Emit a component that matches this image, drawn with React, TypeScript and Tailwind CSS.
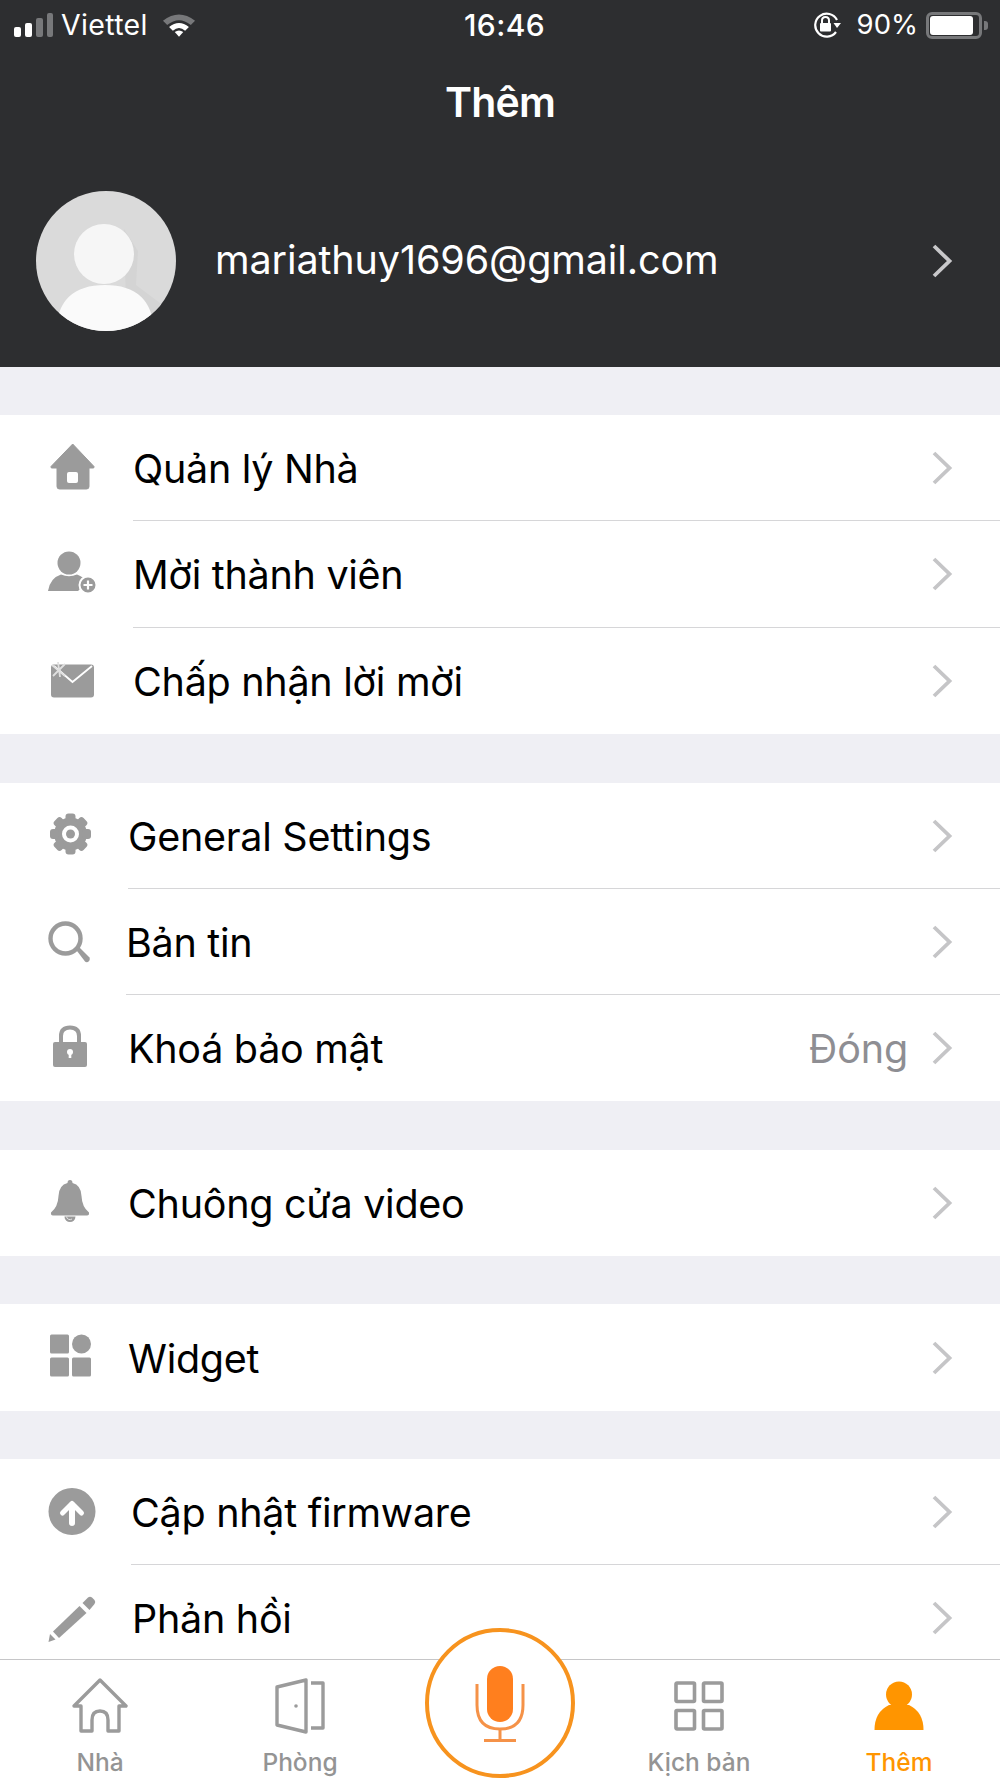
import type { ReactNode } from "react";

const GRAY = "#9b9b9b";

function Chevron({ color = "#c5c5c7" }: { color?: string }) {
  return (
    <svg width="22" height="34" viewBox="0 0 22 34" fill="none" className="shrink-0">
      <polyline points="3,2 18.500,17 3,32" stroke={color} strokeWidth="3.8" />
    </svg>
  );
}

function Icon({ children }: { children: ReactNode }) {
  return (
    <svg width="50" height="50" viewBox="0 0 50 50" fill={GRAY} className="overflow-visible">
      {children}
    </svg>
  );
}

const HomeIcon = (
  <Icon>
    <path d="M24.7 1 L46 23.5 Q46.5 25 45 25 L41 25 L41 43.5 Q41 46 38.5 46 L11.5 46 Q9 46 9 43.5 L9 25 L4 25 Q2.5 25 3 23.5 Z" stroke={GRAY} strokeLinejoin="round" />
    <rect x="19" y="29" width="11" height="11" rx="2" fill="#fff" />
  </Icon>
);

const AddUserIcon = (
  <Icon>
    <circle cx="21" cy="14" r="11.5" />
    <path d="M0 42 Q2 29 13 25.5 Q21 29 29 25.5 Q36 28 39 33 L30 42 Z" />
    <circle cx="40" cy="36" r="8.5" stroke="#fff" strokeWidth="2" />
    <path d="M40 31.5 V40.5 M35.5 36 H44.5" stroke="#fff" strokeWidth="2.2" />
  </Icon>
);

const MailIcon = (
  <Icon>
    <rect x="3" y="8.5" width="43" height="33" rx="3" />
    <polyline points="6,10 24.5,26 44,10" fill="none" stroke="#fff" strokeWidth="1.8" />
    <path d="M4 9 L17 20 M17 8 L5 20 M10 6 L12 21" stroke="#e0e0e0" strokeWidth="1.8" fill="none" />
  </Icon>
);

const GearIcon = (
  <Icon>
    <circle cx="22.5" cy="23" r="16.5" />
    {[0, 45, 90, 135, 180, 225, 270, 315].map((a) => (
      <rect key={a} x="17.5" y="2.5" width="10" height="9" rx="3" transform={`rotate(${a} 22.5 23)`} />
    ))}
    <circle cx="22.5" cy="23" r="8.5" fill="#fff" />
    <circle cx="22.5" cy="23" r="4.5" />
  </Icon>
);

const SearchIcon = (
  <Icon>
    <circle cx="17.5" cy="21.5" r="15" fill="none" stroke={GRAY} strokeWidth="4.4" />
    <path d="M27.5 32 L30.5 29.500 L41.5 40.5 Q42.500 43 40 45 Q38 45.500 37 44.500 Z" />
  </Icon>
);

const LockIcon = (
  <Icon>
    <path d="M13 20 V13 Q13 4.5 22 4.5 Q31 4.5 31 13 V20" fill="none" stroke={GRAY} strokeWidth="4" />
    <rect x="5" y="19" width="34" height="25" rx="2" />
    <circle cx="22" cy="29" r="3" fill="#fff" />
    <rect x="20.7" y="29" width="2.6" height="6" fill="#fff" />
  </Icon>
);

const BellIcon = (
  <Icon>
    <path d="M22 2 Q24.5 2 24.5 5 Q33 7 33.5 18 Q34 29 41 34.5 Q41.5 37.5 39 37.5 L5 37.5 Q2.5 37.5 3 34.5 Q10 29 10.5 18 Q11 7 19.5 5 Q19.5 2 22 2 Z" />
    <path d="M16.5 38.5 A5.5 5.5 0 0 0 27.5 38.5 Z" />
    <path d="M18.5 38.5 A3.5 3.5 0 0 0 24 41" fill="none" stroke="#e4e4e4" strokeWidth="1" />
  </Icon>
);

const WidgetIcon = (
  <Icon>
    <rect x="2" y="1.5" width="19" height="19" rx="1.5" />
    <circle cx="33.5" cy="11" r="9.5" />
    <rect x="2" y="24.5" width="19" height="19" rx="1.5" />
    <rect x="24" y="24.5" width="19" height="19" rx="1.5" />
  </Icon>
);

const UpdateIcon = (
  <Icon>
    <circle cx="24" cy="24.5" r="23.5" />
    <path d="M14.5 26 L24 16.5 L33.5 26" fill="none" stroke="#fff" strokeWidth="5" strokeLinecap="round" strokeLinejoin="round" />
    <path d="M24 18 V36" stroke="#fff" strokeWidth="6" strokeLinecap="round" />
  </Icon>
);

const PencilIcon = (
  <Icon>
    <path d="M0.5 49 L2 41 L7.5 46.5 Z" />
    <path d="M5 38.5 L31.5 13 L38.5 20 L11 45 Z" />
    <path d="M34.5 10 L40 4.5 Q42 3 44 4.5 L46.5 7 Q48 9 46.5 11 L41.5 17 Z" />
  </Icon>
);

type Row = {
  icon: ReactNode;
  label: string;
  slot: string;
  value?: string;
};

function MenuRow({ row, last }: { row: Row; last: boolean }) {
  return (
    <div className="flex min-h-0 flex-1 items-center">
      <div className={`flex h-full shrink-0 items-center pl-[48px] ${row.slot}`}>{row.icon}</div>
      <div className={`flex h-full flex-1 items-center pr-[47px] ${last ? "" : "border-b border-[#d6d6d8]"}`}>
        <span className="flex-1 pt-[4px] text-[39.5px] tracking-[-0.28px] text-black">{row.label}</span>
        {row.value && <span className="mr-[23px] pt-[4px] text-[39.5px] tracking-[-0.15px] text-[#8e8e93]">{row.value}</span>}
        <Chevron />
      </div>
    </div>
  );
}

const group1: Row[] = [
  { icon: HomeIcon, label: "Quản lý Nhà", slot: "w-[133px]" },
  { icon: AddUserIcon, label: "Mời thành viên", slot: "w-[133px]" },
  { icon: MailIcon, label: "Chấp nhận lời mời", slot: "w-[133px]" },
];

const group2: Row[] = [
  { icon: GearIcon, label: "General Settings", slot: "w-[128px]" },
  { icon: SearchIcon, label: "Bản tin", slot: "w-[126px]" },
  { icon: LockIcon, label: "Khoá bảo mật", slot: "w-[128px]", value: "Đóng" },
];

const group5: Row[] = [
  { icon: UpdateIcon, label: "Cập nhật firmware", slot: "w-[131px]" },
  { icon: PencilIcon, label: "Phản hồi", slot: "w-[132px]" },
];

function Group({ rows, className }: { rows: Row[]; className: string }) {
  return (
    <div className={`flex shrink-0 flex-col bg-white ${className}`}>
      {rows.map((r, i) => (
        <MenuRow key={r.label} row={r} last={i === rows.length - 1} />
      ))}
    </div>
  );
}

function StatusBar() {
  return (
    <div className="relative flex h-[50px] items-center justify-between pl-[14px] pr-[12px] text-white">
      <div className="flex items-center">
        <svg width="40" height="26" viewBox="0 0 40 26">
          <rect x="0" y="15" width="7" height="10" rx="2" fill="#fff" />
          <rect x="11" y="11" width="7" height="14" rx="2" fill="#fff" />
          <rect x="22" y="6" width="7" height="19" rx="2" fill="#77787a" />
          <rect x="33" y="1" width="6" height="24" rx="2" fill="#77787a" />
        </svg>
        <span className="ml-[7px] text-[28.5px] tracking-[0.35px]">Viettel</span>
        <svg width="34" height="26" viewBox="0 0 36 26" className="ml-[14px]">
          <path d="M1 8.500 Q18 -5 35 8.500 L30.500 13 Q18 3 5.500 13 Z" fill="#77787a" />
          <path d="M7.500 15 Q18 6.500 28.500 15 L24.500 19 Q18 13.500 11.500 19 Z" fill="#fff" />
          <path d="M13.500 20.500 Q18 17 22.500 20.500 L18 25.500 Z" fill="#fff" />
        </svg>
      </div>
      <span className="absolute left-[9px] right-0 text-center text-[30px] font-medium tracking-[0.4px]">16:46</span>
      <div className="flex items-center">
        <svg width="30" height="26" viewBox="0 0 30 26" fill="none">
          <path d="M24 20 A11.500 11.500 0 1 1 25 8" stroke="#fff" strokeWidth="2.200" />
          <path d="M21.500 11 L29 11 L25 16 Z" fill="#fff" />
          <path d="M10 11 V8.500 Q10 5 13.500 5 Q17 5 17 8.500 V11" stroke="#fff" strokeWidth="2" />
          <rect x="8" y="11" width="11" height="8.500" rx="1" fill="#fff" />
        </svg>
        <span className="ml-[15px] text-[27.5px]">90%</span>
        <div className="ml-[8px] flex items-center">
          <div className="flex h-[27px] w-[56px] items-center rounded-[6px] border-[3px] border-[#77787a] p-[1px]">
            <div className="h-full w-[43px] rounded-[3px] bg-white" />
          </div>
          <div className="ml-[2px] h-[9px] w-[4px] rounded-r-[3px] bg-[#77787a]" />
        </div>
      </div>
    </div>
  );
}

function Avatar() {
  return (
    <svg width="140" height="140" viewBox="0 0 140 140" className="shrink-0">
      <defs>
        <clipPath id="avatar-clip">
          <circle cx="70" cy="70" r="70" />
        </clipPath>
      </defs>
      <circle cx="70" cy="70" r="70" fill="#dadada" />
      <g clipPath="url(#avatar-clip)">
        <path d="M88 38 L102 60 L100 94 L132 118 L118 132 L90 110 Z" fill="#d4d4d4" />
        <path d="M20 140 Q22 94 69 94 Q116 94 118 140 Z" fill="#fafafa" />
      </g>
      <circle cx="68" cy="63" r="30" fill="#f6f6f6" />
    </svg>
  );
}

function Header() {
  return (
    <div className="flex h-[367px] shrink-0 flex-col bg-[#2d2e30]">
      <StatusBar />
      <div className="mt-[27px] text-center text-[41px] font-semibold leading-[50px] tracking-[-0.8px] text-white">Thêm</div>
      <div className="mt-[64px] flex items-center pl-[36px] pr-[47px]">
        <Avatar />
        <span className="ml-[39px] flex-1 text-[39.5px] tracking-[-0.1px] text-white">mariathuy1696@gmail.com</span>
        <Chevron color="#c8c8ca" />
      </div>
    </div>
  );
}

function TabItem({ label, icon, active, className = "" }: { label: string; icon: ReactNode; active?: boolean; className?: string }) {
  return (
    <div className={`flex flex-col items-center pt-[18px] ${className}`}>
      <div className="flex h-[56px] items-center">{icon}</div>
      <span className={`mt-[14px] text-[24.5px] font-medium leading-[28px] ${active ? "text-[#ff9500]" : "text-[#949494]"}`}>
        {label}
      </span>
    </div>
  );
}

function TabBar() {
  return (
    <div className="relative grid h-[119px] shrink-0 grid-cols-5 border-t border-[#c6c6c8] bg-white">
      <TabItem
        label="Nhà"
        icon={
          <svg width="56" height="56" viewBox="0 0 56 56" fill="none" stroke={GRAY} strokeWidth="3.400" strokeLinejoin="round">
            <path d="M28 2 L54 28 L47 28 L47 53 L36 53 L36 42 Q36 33 28 33 Q20 33 20 42 L20 53 L9 53 L9 28 L2 28 Z" />
          </svg>
        }
      />
      <TabItem
        label="Phòng"
        icon={
          <svg width="50" height="56" viewBox="0 0 50 56" fill="none" stroke={GRAY} strokeWidth="3.400" strokeLinejoin="round">
            <path d="M2 9 L31 2 L31 54 L2 47 Z" />
            <path d="M36 5 L48 5 L48 50 L36 50" />
            <circle cx="21" cy="28" r="1.800" fill={GRAY} stroke="none" />
          </svg>
        }
      />
      <div />
      <TabItem
        label="Kịch bản"
        className="pr-[2px]"
        icon={
          <svg width="50" height="50" viewBox="0 0 50 50" fill="none" stroke={GRAY} strokeWidth="3.600">
            <rect x="2" y="2" width="18.500" height="18.500" rx="1" />
            <rect x="29.500" y="2" width="18.500" height="18.500" rx="1" />
            <rect x="2" y="29.500" width="18.500" height="18.500" rx="1" />
            <rect x="29.500" y="29.500" width="18.500" height="18.500" rx="1" />
          </svg>
        }
      />
      <TabItem
        label="Thêm"
        active
        className="pr-[2px]"
        icon={
          <svg width="50" height="50" viewBox="0 0 50 50" fill="#ff9500">
            <circle cx="25" cy="13.500" r="13" />
            <path d="M0.500 49 Q0.500 31 15 24 L35 24 Q49.500 31 49.500 49 Z" />
          </svg>
        }
      />
      <div className="absolute left-[425px] top-[-32px] flex h-[150px] w-[150px] items-center justify-center rounded-full border-[4px] border-[#f7931e] bg-white">
        <svg width="56" height="80" viewBox="0 0 56 80" fill="none" className="mt-[2px]">
          <rect x="15" y="2" width="26" height="56" rx="13" fill="#ff7f1e" />
          <path d="M5 20 V41 Q5 65 28 65 Q51 65 51 41 V20" stroke="#f59248" strokeWidth="3" />
          <path d="M28 65 V76 M12 76.500 H44" stroke="#f59248" strokeWidth="3" />
        </svg>
      </div>
    </div>
  );
}

export default function App() {
  return (
    <div className="flex h-[1778px] w-[1000px] flex-col overflow-hidden bg-white font-['Inter','Noto_Sans',sans-serif]">
      <Header />
      <div className="flex min-h-0 flex-1 flex-col overflow-hidden bg-[#efeff4]">
        <Group rows={group1} className="mt-[48px] h-[319px]" />
        <Group rows={group2} className="mt-[49px] h-[318px]" />
        <Group rows={[{ icon: BellIcon, label: "Chuông cửa video", slot: "w-[128px]" }]} className="mt-[49px] h-[106px]" />
        <Group rows={[{ icon: WidgetIcon, label: "Widget", slot: "w-[128px]" }]} className="mt-[48px] h-[107px]" />
        <Group rows={group5} className="mt-[48px] h-[212px]" />
      </div>
      <TabBar />
    </div>
  );
}
